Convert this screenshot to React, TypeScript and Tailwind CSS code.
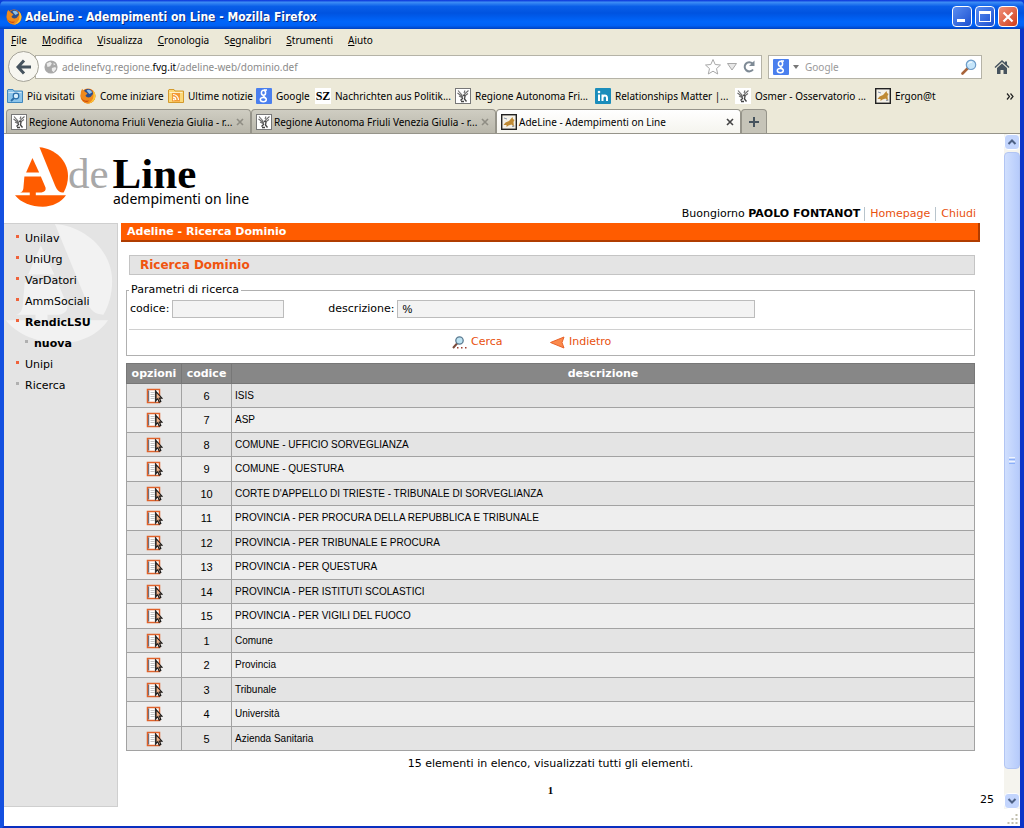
import React from "react";

interface Row {
  code: number;
  description: string;
}

const rows: Row[] = [
  { code: 6, description: "ISIS" },
  { code: 7, description: "ASP" },
  { code: 8, description: "COMUNE - UFFICIO SORVEGLIANZA" },
  { code: 9, description: "COMUNE - QUESTURA" },
  { code: 10, description: "CORTE D'APPELLO DI TRIESTE - TRIBUNALE DI SORVEGLIANZA" },
  { code: 11, description: "PROVINCIA - PER PROCURA DELLA REPUBBLICA E TRIBUNALE" },
  { code: 12, description: "PROVINCIA - PER TRIBUNALE E PROCURA" },
  { code: 13, description: "PROVINCIA - PER QUESTURA" },
  { code: 14, description: "PROVINCIA - PER ISTITUTI SCOLASTICI" },
  { code: 15, description: "PROVINCIA - PER VIGILI DEL FUOCO" },
  { code: 1, description: "Comune" },
  { code: 2, description: "Provincia" },
  { code: 3, description: "Tribunale" },
  { code: 4, description: "Università" },
  { code: 5, description: "Azienda Sanitaria" },
];

// text before the access key, the key itself, text after it
const menus = [
  ["", "F", "ile"],
  ["", "M", "odifica"],
  ["", "V", "isualizza"],
  ["", "C", "ronologia"],
  ["S", "e", "gnalibri"],
  ["", "S", "trumenti"],
  ["", "A", "iuto"],
];

const navItems = [
  { label: "Unilav" },
  { label: "UniUrg" },
  { label: "VarDatori" },
  { label: "AmmSociali" },
  { label: "RendicLSU", bold: true },
  { label: "nuova", bold: true, child: true, gray: true },
  { label: "Unipi" },
  { label: "Ricerca", gray: true },
];

function FirefoxIcon() {
  return (
    <svg viewBox="0 0 16 16" className="w-4 h-4 shrink-0">
      <circle cx="8" cy="8" r="7.500" fill="#e8720c" />
      <circle cx="8" cy="6" r="5" fill="#2c4f8e" />
      <path d="M6.500 2.500c2-1.500 5-.5 5.500 2L9.500 6 8 4.500z" fill="#8fc1e8" />
      <path d="M.8 5C1 3.500 1.500 1.500 2.500.8c0 1 1 2 2 2.500L7.500 5.500 5.500 7.500c.5 2 3 2.500 5 1.500L13 6l2.200.5c.5 5-3 9-7.200 9C3.500 15.500 0 11 .8 5z" fill="#f08a1c" />
      <path d="M13 2.500c2 2 2.800 4.500 2.200 7C14.500 13 11 15.500 8 15.500c3-1.500 5.500-4 5.500-7.500z" fill="#fbc63a" />
      <path d="M1 9c1.500 3.500 5 4.500 8 3.500-1.500 2-6 2-8-3.500z" fill="#c23c08" />
    </svg>
  );
}

function FolderIcon({ fill, stroke, children }: { fill: string; stroke: string; children: React.ReactNode }) {
  return (
    <svg viewBox="0 0 16 16" className="w-4 h-4 shrink-0">
      <path d="M1 1.500h5l1 1.500h8.500v11.500H.5V2z" fill={fill} stroke={stroke} />
      <path d="M1.500 4.500h13" stroke="#fff" opacity=".6" />
      {children}
    </svg>
  );
}

function MostVisitedIcon() {
  return (
    <FolderIcon fill="#8cc4ea" stroke="#3f87bd">
      <circle cx="9" cy="8" r="2.800" fill="#d8effc" stroke="#2a6da8" strokeWidth="1.200" />
      <path d="M7 10l-3 3" stroke="#2a6da8" strokeWidth="1.800" />
    </FolderIcon>
  );
}

function FeedIcon() {
  return (
    <FolderIcon fill="#fbd877" stroke="#d39a2c">
      <path d="M4 5h8v8.500H4z" fill="#f39a35" />
      <path d="M5 6.500c3 0 5.500 2.500 5.500 5.500M5 9.200c1.600 0 2.800 1.200 2.800 2.800" stroke="#fff" strokeWidth="1.200" fill="none" />
      <circle cx="5.800" cy="11.500" r=".9" fill="#fff" />
    </FolderIcon>
  );
}

function GoogleIcon() {
  return (
    <svg viewBox="0 0 16 16" className="w-4 h-4 shrink-0">
      <rect width="16" height="16" rx="1" fill="#4a7fee" />
      <ellipse cx="7.500" cy="4.800" rx="2.100" ry="2.500" fill="none" stroke="#fff" strokeWidth="1.500" />
      <path d="M8 2h3M7 7.300c0 1.200 2.800 1.500 2.800 3.700" fill="none" stroke="#fff" strokeWidth="1.500" />
      <ellipse cx="7.300" cy="11.600" rx="3" ry="2.200" fill="none" stroke="#fff" strokeWidth="1.500" />
    </svg>
  );
}

function EagleIcon({ framed = true }: { framed?: boolean }) {
  return (
    <svg viewBox="0 0 16 16" className="w-4 h-4 shrink-0">
      <rect x=".5" y=".5" width="15" height="15" fill="#fff" stroke={framed ? "#777" : "#fff"} />
      <path d="M3 2.500l4.500 5M2.500 5L8 9M4 8l4 2M13.500 2.500L10 5.500 8.500 8M13 5.500L9.500 8M10 2.500L9 5" fill="none" stroke="#6a6a6a" strokeWidth="1.100" />
      <path d="M8 7l2 1-.5 3 2 2.500M8 10l-2.500 2.500M6 13.500h3" fill="none" stroke="#444" strokeWidth="1.300" />
    </svg>
  );
}

function CatIcon() {
  return (
    <svg viewBox="0 0 16 16" className="w-4 h-4 shrink-0">
      <rect x=".7" y=".7" width="14.600" height="14.600" fill="#f4f1e8" stroke="#222" strokeWidth="1.400" />
      <path d="M2.500 11l2-2.500 3.500-1.500L11.500 3l.5 2 1.500 1-1 2 .5 5-2.500-2.500-3 1-2 1.500v-2z" fill="#bf8a34" />
      <path d="M3 4l3 1M11 12.500l2.500-.5" stroke="#8a97ad" />
    </svg>
  );
}

function LinkedInIcon() {
  return (
    <svg viewBox="0 0 16 16" className="w-4 h-4 shrink-0">
      <rect width="16" height="16" rx="1" fill="#1b8dbb" />
      <circle cx="4" cy="4" r="1.300" fill="#fff" />
      <path d="M4 6.500V13M7.500 6.500V13M7.500 10c0-3 4.500-3.500 4.500 0v3" fill="none" stroke="#fff" strokeWidth="2" />
    </svg>
  );
}

function SzIcon() {
  return (
    <span className="w-4 h-4 shrink-0 bg-white flex items-center justify-center font-['Liberation_Serif',serif] font-bold text-xs">
      SZ
    </span>
  );
}

const bookmarks = [
  { label: "Più visitati", icon: <MostVisitedIcon />, width: "w-[66px]" },
  { label: "Come iniziare", icon: <FirefoxIcon />, width: "w-[81px]" },
  { label: "Ultime notizie", icon: <FeedIcon />, width: "w-[81px]" },
  { label: "Google", icon: <GoogleIcon />, width: "w-[52px]" },
  { label: "Nachrichten aus Politik...", icon: <SzIcon />, width: "w-[133px]" },
  { label: "Regione Autonoma Fri...", icon: <EagleIcon />, width: "w-[133px]" },
  { label: "Relationships Matter |...", icon: <LinkedInIcon />, width: "w-[133px]" },
  { label: "Osmer - Osservatorio ...", icon: <EagleIcon framed={false} />, width: "w-[133px]" },
  { label: "Ergon@t", icon: <CatIcon />, width: "w-[66px]" },
];

function Emblem({ className }: { className: string }) {
  return (
    <svg viewBox="0 0 158 177" fill="currentColor" className={className} aria-hidden="true">
      <path d="M73 0c44 3 85 39 85 85 0 19-5 36-13 50-13-1-19-6-25-20z" />
      <path d="M52 32l20 43H33z" />
      <path d="M28 87h49l14 33c2 7-2 13-12 15H62v8h90c-14 21-41 34-69 34-34 0-66-12-83-34h44v-8H15c7-2 9-7 10-13z" />
    </svg>
  );
}

function TitleBar() {
  return (
    <header className="flex items-center h-[29px] px-1.5 pt-1 rounded-t-md bg-[linear-gradient(#0831d9_0%,#3c8cf5_8%,#0a5fe8_22%,#0053e0_45%,#0066fb_75%,#0061f5_88%,#0042c0_100%)]">
      <FirefoxIcon />
      <h1 className="ml-[3px] text-white font-bold text-xs font-['DejaVu_Sans_Condensed','Noto_Sans',sans-serif] [text-shadow:1px_1px_0_#0a2a80]">
        AdeLine - Adempimenti on Line - Mozilla Firefox
      </h1>
      <div className="ml-auto flex gap-[3px]">
        <button aria-label="Riduci" className="w-5 h-[21px] rounded-sm border border-white bg-linear-to-br from-[#5b8df0] to-[#1c4fd0] flex items-end p-1">
          <span className="w-2 h-[3px] bg-white" />
        </button>
        <button aria-label="Ingrandisci" className="w-5 h-[21px] rounded-sm border border-white bg-linear-to-br from-[#5b8df0] to-[#1c4fd0] flex items-center justify-center">
          <span className="w-3 h-[11px] border border-t-[3px] border-white" />
        </button>
        <button aria-label="Chiudi finestra" className="w-5 h-[21px] rounded-sm border border-white bg-linear-to-br from-[#f09078] to-[#cf3a10] flex items-center justify-center">
          <svg viewBox="0 0 12 12" className="w-3 h-3">
            <path d="M1.500 1.500l9 9M10.500 1.500l-9 9" stroke="#fff" strokeWidth="2.200" />
          </svg>
        </button>
      </div>
    </header>
  );
}

function NavBar() {
  return (
    <div className="flex items-center h-[33px] pl-1 pr-2.5">
      <button aria-label="Indietro di una pagina" className="relative z-10 w-[31px] h-[31px] shrink-0 rounded-full border border-[#a5a398] bg-[#f7f6f0] flex items-center justify-center">
        <svg viewBox="0 0 16 16" className="w-4 h-4">
          <path d="M8 1.500L2 8l6 6.500M2.500 8H15" fill="none" stroke="#46535e" strokeWidth="3" />
        </svg>
      </button>
      <div className="flex-1 flex items-center h-6 -ml-1 pl-2 pr-1 bg-white border border-[#b5b3a7]">
        <svg viewBox="0 0 16 16" className="w-3.5 h-3.5 shrink-0">
          <circle cx="8" cy="8" r="7.500" fill="#a9a9a9" />
          <path d="M3 4l4-2 2 2-2 3-3 1zM9 9l4-1 1 2-3 4-2-2zM11 3l2 2-2 1z" fill="#ececec" />
        </svg>
        <div
          role="textbox"
          aria-label="Indirizzo"
          contentEditable
          suppressContentEditableWarning
          className="ml-1 flex-1 text-[#8b8b8b] whitespace-nowrap outline-none"
        >
          adelinefvg.regione.<span className="text-black">fvg.it</span>/adeline-web/dominio.def
        </div>
        <svg viewBox="0 0 18 18" className="w-[18px] h-[18px]">
          <path d="M9 1.500l2.200 5 5.300.5-4 3.600 1.200 5.400L9 13.200 4.300 16l1.200-5.400-4-3.600 5.300-.5z" fill="#fff" stroke="#a8a8a8" />
        </svg>
        <svg viewBox="0 0 12 12" className="ml-1 w-3 h-3">
          <path d="M1.500 2.500h9L6 9z" fill="#e8e8e8" stroke="#a8a8a8" />
        </svg>
        <svg viewBox="0 0 16 16" className="ml-[3px] w-4 h-4">
          <path d="M11.500 4.500A4.600 4.600 0 1 0 12 10.500" fill="none" stroke="#7e8a95" strokeWidth="2" />
          <path d="M13.500 1.500v5.500H8z" fill="#7e8a95" />
        </svg>
      </div>
      <div className="flex items-center w-[214px] h-6 ml-1.5 px-1 bg-white border border-[#b5b3a7]">
        <GoogleIcon />
        <svg viewBox="0 0 6 4" className="ml-1 w-1.5 h-1">
          <path d="M0 0h6L3 4z" fill="#777" />
        </svg>
        <input aria-label="Cerca con Google" placeholder="Google" className="ml-1.5 flex-1 min-w-0 outline-none placeholder:text-[#9a9a9a]" />
        <svg viewBox="0 0 16 16" className="w-4 h-4">
          <path d="M7 9L1.500 14.500" stroke="#a8643a" strokeWidth="2.600" strokeLinecap="round" />
          <circle cx="10" cy="5.800" r="4.700" fill="#c5e5fa" stroke="#6d9cc8" strokeWidth="1.200" />
          <path d="M7.500 5c.5-1.500 2-2.200 3.500-1.800" fill="none" stroke="#fff" />
        </svg>
      </div>
      <button aria-label="Pagina iniziale" className="ml-3">
        <svg viewBox="0 0 16 16" className="w-4 h-4">
          <path d="M8 1L.5 8l1 1L8 3l6.500 6 1-1L13 5.600V2.500h-2v1.200z" fill="#46535e" />
          <path d="M8 4.500L3 9v6h3.500v-4h3v4H13V9z" fill="#46535e" />
        </svg>
      </button>
    </div>
  );
}

function Tab({ icon, label, active = false }: { icon: React.ReactNode; label: string; active?: boolean }) {
  return (
    <div
      role="tab"
      aria-selected={active}
      className={`flex items-center w-[245px] h-6 pl-1 pr-1.5 border border-b-0 border-[#96948a] rounded-t-sm ${
        active ? "bg-linear-to-b from-white to-[#f5f4ee]" : "bg-linear-to-b from-[#cfcdc2] to-[#b9b7ab]"
      }`}
    >
      {icon}
      <span className="ml-0.5 flex-1 whitespace-nowrap">{label}</span>
      <button aria-label="Chiudi scheda" className={active ? "text-[#444]" : "text-[#8f8d84]"}>
        <svg viewBox="0 0 8 8" className="w-2 h-2">
          <path d="M1 1l6 6M7 1L1 7" stroke="currentColor" strokeWidth="1.600" />
        </svg>
      </button>
    </div>
  );
}

function Scrollbar() {
  return (
    <div className="w-4 shrink-0 flex flex-col bg-[#f5f4ee]" aria-hidden="true">
      <div className="h-4 rounded-sm border border-white bg-[#c3d5fd] flex items-center justify-center">
        <svg viewBox="0 0 9 6" className="w-2.5 h-1.5">
          <path d="M1 5l3.500-3.500L8 5" fill="none" stroke="#4d6185" strokeWidth="2" />
        </svg>
      </div>
      <div className="mt-0.5 flex-1 rounded-sm border border-[#b2c5f3] bg-linear-to-r from-[#d0dffe] to-[#b6cbfb] flex flex-col items-center justify-center gap-px">
        <i className="w-1.5 h-px bg-[#eef4fe]" />
        <i className="w-1.5 h-px bg-[#8cb0f8]" />
        <i className="w-1.5 h-px bg-[#eef4fe]" />
        <i className="w-1.5 h-px bg-[#8cb0f8]" />
      </div>
      <div className="h-6" />
      <div className="h-4 rounded-sm border border-white bg-[#c3d5fd] flex items-center justify-center">
        <svg viewBox="0 0 9 6" className="w-2.5 h-1.5">
          <path d="M1 1l3.500 3.500L8 1" fill="none" stroke="#4d6185" strokeWidth="2" />
        </svg>
      </div>
      <svg viewBox="0 0 15 17" className="h-[17px] bg-white">
        <path d="M11 5h2v2h-2zM7 9h2v2H7zM11 9h2v2h-2zM3 13h2v2H3zM7 13h2v2H7zM11 13h2v2h-2z" fill="#c1bfae" />
      </svg>
    </div>
  );
}

function SelectIcon() {
  return (
    <svg viewBox="0 0 17 16" className="w-[17px] h-4">
      <path d="M1.500 1.500h12v13h-12z" fill="#fff" stroke="#e0622a" strokeWidth="1.500" />
      <path d="M2.700 2.500v11" stroke="#556" />
      <path d="M4.500 4.500h4M4.500 6.500h4M4.500 8.500h4M4.500 10.500h4" stroke="#c4c4c4" />
      <path d="M9.500 2v12.500" stroke="#444" strokeWidth="1.200" />
      <path d="M10 3.500v9l1.800-1.800 1.400 3.500 1.600-.8-1.300-3.200h2.500z" fill="#f0b48c" stroke="#1c1c1c" strokeWidth="1.200" />
    </svg>
  );
}

function Sidebar() {
  return (
    <nav className="relative w-[114px] shrink-0 bg-[#e4e4e4] border border-l-0 border-[#cfcfcf] pt-1">
      <Emblem className="absolute left-0 top-0 w-[110px] h-[119px] text-[#f2f2f2]" />
      <ul className="relative">
        {navItems.map((item) => (
          <li key={item.label} className={`flex items-center h-[21px] ${item.child ? "pl-[21px]" : "pl-3"}`}>
            <i className={`w-[3px] h-[3px] mb-1 ${item.gray ? "bg-[#b0b0b0]" : "bg-[#f0623a]"}`} />
            <a href="#" className={`ml-1.5 ${item.bold ? "font-bold" : ""}`}>{item.label}</a>
          </li>
        ))}
      </ul>
    </nav>
  );
}

function SearchForm() {
  return (
    <form className="mt-2 mx-[5px]">
      <fieldset className="border border-[#b0b0b0] pb-[3px]">
        <legend className="ml-0.5 px-0.5">Parametri di ricerca</legend>
        <div className="flex items-center h-6 pl-[3px]">
          <label htmlFor="codice">codice:</label>
          <input id="codice" className="ml-[3px] w-28 h-[18px] px-1 bg-[#f3f3f3] border border-[#bcbcbc] font-['Liberation_Sans',sans-serif]" />
          <label htmlFor="descrizione" className="ml-11">descrizione:</label>
          <input id="descrizione" defaultValue="%" className="ml-[3px] w-[358px] h-[18px] px-1 bg-[#f3f3f3] border border-[#bcbcbc] font-['Liberation_Sans',sans-serif]" />
        </div>
        <hr className="mt-2 mx-0.5 border-[#d0d0d0]" />
        <div className="flex items-center h-[22px] pt-0.5 pl-[325px] text-[#e8500e]">
          <a href="#" className="flex items-center gap-1 w-[98px]">
            <svg viewBox="0 0 15 13" className="w-[15px] h-[13px]">
              <path d="M5.500 7L1 12" stroke="#7a4a3a" strokeWidth="2" />
              <circle cx="7.500" cy="4.500" r="3.700" fill="#bfe3f2" stroke="#5d7c92" strokeWidth="1.300" />
              <path d="M5 11h1.500v1.500H5zM9 11h1.500v1.500H9zM13 11h1.500v1.500H13z" fill="#a04030" />
            </svg>
            Cerca
          </a>
          <a href="#" className="flex items-center gap-1">
            <svg viewBox="0 0 15 13" className="w-[15px] h-[13px]">
              <path d="M.5 6.500L14 1l-2 5.500 2 5.500z" fill="#fb8a4c" stroke="#e8622a" />
            </svg>
            Indietro
          </a>
        </div>
      </fieldset>
    </form>
  );
}

function Results() {
  return (
    <div className="mx-[5px] mt-[7px]">
      <table className="w-full border-collapse">
        <thead>
          <tr className="h-5 bg-[#878787] text-white">
            <th className="w-[55px] border border-[#777]">opzioni</th>
            <th className="w-[50px] border border-[#777]">codice</th>
            <th className="border border-[#777]">descrizione</th>
          </tr>
        </thead>
        <tbody className="font-['Liberation_Sans',sans-serif]">
          {rows.map((row) => (
            <tr key={row.code} className="h-6 even:h-[25px] bg-[#e4e4e4] even:bg-[#eee]">
              <td className="border border-[#a2a2a2]">
                <a href="#" aria-label={`Seleziona ${row.code}`} className="flex justify-center">
                  <SelectIcon />
                </a>
              </td>
              <td className="border border-[#a2a2a2] text-center">{row.code}</td>
              <td className="border border-[#a2a2a2] pl-[3px] text-[10px]">{row.description}</td>
            </tr>
          ))}
        </tbody>
      </table>
    </div>
  );
}

export default function App() {
  return (
    <div className="min-h-screen flex flex-col bg-[#0a3fd8] text-black text-[11px] leading-[14px] font-['Noto_Sans',sans-serif]">
      <TitleBar />
      <div className="flex-1 flex flex-col border-4 border-t-0 border-l-[#1450e0] border-r-[#0a35c8] border-b-[#0a2fc0] bg-[#ece9d8] text-[10px]">
        <menu className="flex items-center gap-[15px] h-[21px] pl-[7px]">
          {menus.map(([before, key, after]) => (
            <li key={before + key + after}>
              {before}
              <u>{key}</u>
              {after}
            </li>
          ))}
        </menu>
        <NavBar />
        <div className="flex items-center gap-[7px] h-[26px] pl-[3px] pr-1.5">
          {bookmarks.map((b) => (
            <a key={b.label} href="#" className={`flex items-center gap-1 shrink-0 whitespace-nowrap ${b.width}`}>
              {b.icon}
              {b.label}
            </a>
          ))}
          <button aria-label="Altri segnalibri" className="ml-auto">
            <svg viewBox="0 0 8 7" className="w-2 h-[7px]">
              <path d="M1 .5l2.500 3L1 6.500M4.500.5L7 3.500 4.500 6.500" fill="none" stroke="#222" strokeWidth="1.200" />
            </svg>
          </button>
        </div>
        <div role="tablist" className="flex pl-0.5 border-b border-[#96948a]">
          <Tab icon={<EagleIcon />} label="Regione Autonoma Friuli Venezia Giulia - r..." />
          <Tab icon={<EagleIcon />} label="Regione Autonoma Friuli Venezia Giulia - r..." />
          <Tab icon={<CatIcon />} label="AdeLine - Adempimenti on Line" active />
          <button aria-label="Nuova scheda" className="w-[26px] border border-b-0 border-[#96948a] rounded-t-sm bg-[#c6c4b8] flex items-center justify-center">
            <svg viewBox="0 0 10 10" className="w-2.5 h-2.5">
              <path d="M5 0v10M0 5h10" stroke="#46535e" strokeWidth="2" />
            </svg>
          </button>
        </div>

        <div className="flex-1 flex bg-white text-[11px]">
          <div className="flex-1 flex flex-col pb-[19px] font-['DejaVu_Sans',sans-serif]">
            <div className="flex h-[89px] pl-[11px] pr-7">
              <Emblem className="mt-[13px] w-[53px] h-[60px] text-[#ff5c00]" />
              <div className="mt-[23px]">
                <div className="flex gap-1 font-['Liberation_Serif',serif] text-[43px] leading-[34px]">
                  <span className="text-[#a8a8a8]">de</span>
                  <span className="font-bold">Line</span>
                </div>
                <p className="ml-[45px] text-sm leading-4 font-['Noto_Sans',sans-serif]">adempimenti on line</p>
              </div>
              <div className="ml-auto mt-auto mb-px flex h-4 items-center">
                <span>Buongiorno <b>PAOLO FONTANOT</b></span>
                <a href="#" className="ml-1 px-[5px] border-l border-[#b8c4cc] text-[#e8500e]">Homepage</a>
                <a href="#" className="pl-[5px] border-l border-[#b8c4cc] text-[#e8500e]">Chiudi</a>
              </div>
            </div>
            <div className="flex-1 flex gap-[3px]">
              <Sidebar />
              <main className="flex-1 mr-6">
                <h2 className="h-[19px] pl-1.5 leading-[17px] font-bold text-white bg-[#ff5c00] border-r-2 border-b-2 border-[#b03c00]">
                  Adeline - Ricerca Dominio
                </h2>
                <h3 className="mt-[13px] ml-2 mr-[5px] h-5 pl-2.5 text-xs leading-[18px] font-bold text-[#f0540f] bg-[#e4e4e4] border border-[#c4c4c4]">
                  Ricerca Dominio
                </h3>
                <SearchForm />
                <Results />
                <p className="mt-1.5 text-center">15 elementi in elenco, visualizzati tutti gli elementi.</p>
                <p className="mt-3 text-center font-bold font-['Liberation_Serif',serif]">1</p>
                <p className="-mr-3.5 -mt-1 text-right">25</p>
              </main>
            </div>
          </div>
          <Scrollbar />
        </div>
      </div>
    </div>
  );
}
